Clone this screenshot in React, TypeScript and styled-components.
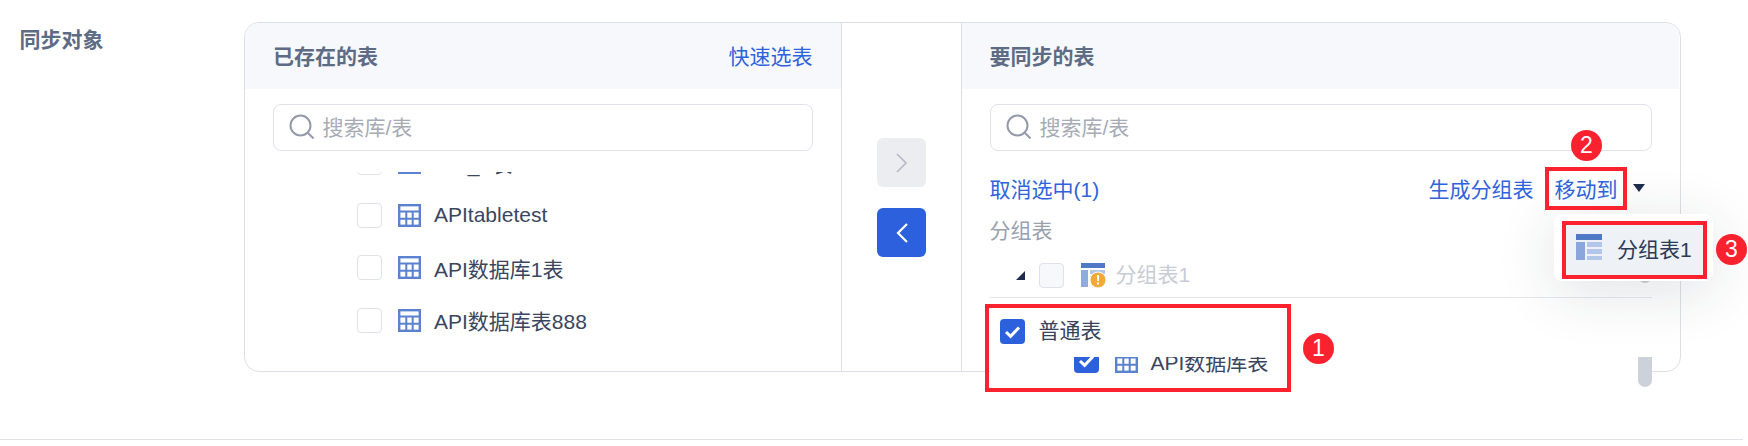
import React from "react";
import styled, { createGlobalStyle } from "styled-components";

const Global = createGlobalStyle`
  html, body { margin: 0; padding: 0; background: #fff; }
  body { font-family: "Liberation Sans", "Noto Sans CJK SC", sans-serif; }
`;

const Page = styled.div`
  position: relative;
  width: 1748px;
  height: 446px;
  overflow: hidden;
  background: #fff;
`;

const Section = styled.div`
  display: flex;
  align-items: flex-start;
  width: 1743px;
  height: 417px;
  padding-top: 22px;
  box-sizing: content-box;
  border-bottom: 1.5px solid #dfe1e6;
`;

const SectionLabel = styled.div`
  width: 224.5px;
  padding: 3px 0 0 19.5px;
  font-size: 21px;
  line-height: 30px;
  font-weight: 700;
  color: #5d6b84;
`;

const Panel = styled.div`
  display: flex;
  width: 1437px;
  height: 350px;
  box-sizing: border-box;
  border: 1.5px solid #dcdfe6;
  border-radius: 15px;
`;

const Pane = styled.div<{ $width: number }>`
  display: flex;
  flex-direction: column;
  width: ${(p) => p.$width}px;
  flex: none;
`;

const PaneHead = styled.div<{ $side: "left" | "right" }>`
  display: flex;
  align-items: center;
  justify-content: space-between;
  height: 66px;
  flex: none;
  box-sizing: border-box;
  padding: 0 28.5px 2px ${(p) => (p.$side === "left" ? 28 : 27.5)}px;
  background: #f7f8fc;
  border-radius: ${(p) => (p.$side === "left" ? "14px 0 0 0" : "0 14px 0 0")};
`;

const HeadTitle = styled.div`
  font-size: 21px;
  font-weight: 700;
  color: #5d6b84;
`;

const LinkText = styled.span<{ $gap?: number }>`
  margin-left: ${(p) => p.$gap ?? 0}px;
  font-size: 21px;
  color: #2f63dd;
  white-space: nowrap;
`;

const SearchBox = styled.div<{ $left: number; $right: number }>`
  display: flex;
  align-items: center;
  gap: 8px;
  height: 47px;
  flex: none;
  box-sizing: border-box;
  margin: 15px ${(p) => p.$right}px 0 ${(p) => p.$left}px;
  padding: 0 0 2px 15px;
  border: 1.5px solid #dfe2ea;
  border-radius: 8px;
  font-size: 21px;
  color: #a6abb6;
`;

const List = styled.div`
  display: flex;
  flex-direction: column;
  height: 200px;
  margin-top: 21px;
  padding-left: 112px;
  overflow: hidden;
  justify-content: flex-end;
  padding-bottom: 24.5px;
  box-sizing: border-box;
`;

const TableRow = styled.div`
  display: flex;
  align-items: center;
  height: 52.5px;
  flex: none;
  font-size: 21px;
  color: #3a4660;
`;

const Check = styled.span<{ $on?: boolean; $muted?: boolean }>`
  display: inline-flex;
  align-items: center;
  justify-content: center;
  width: 25px;
  height: 25px;
  flex: none;
  box-sizing: border-box;
  border-radius: 4px;
  border: ${(p) => (p.$on ? "none" : "1.5px solid #dfe2ea")};
  background: ${(p) => (p.$on ? "#2c60dc" : p.$muted ? "#f7f8fc" : "#fff")};
`;

const RowIcon = styled.span`
  display: inline-flex;
  margin: 0 13px 0 16px;
  flex: none;
`;

const RaisedText = styled.span<{ $lift: number }>`
  padding-bottom: ${(p) => p.$lift}px;
`;

const Middle = styled.div`
  display: flex;
  flex-direction: column;
  align-items: center;
  gap: 21px;
  flex: none;
  width: 119px;
  box-sizing: content-box;
  padding-top: 115px;
  border-left: 1.5px solid #dcdfe6;
  border-right: 1.5px solid #dcdfe6;
`;

const MoveButton = styled.div<{ $active?: boolean }>`
  display: flex;
  align-items: center;
  justify-content: center;
  width: 49px;
  height: 49px;
  border-radius: 6px;
  background: ${(p) => (p.$active ? "#2c60dc" : "#ecedf1")};
  color: ${(p) => (p.$active ? "#fff" : "#b6bac5")};
`;

const Toolbar = styled.div`
  display: flex;
  align-items: center;
  justify-content: space-between;
  height: 40px;
  margin: 17px 34.5px 0 27.5px;
  flex: none;
`;

const ToolbarRight = styled.div`
  display: flex;
  align-items: center;
`;

const Caret = styled.span`
  width: 0;
  height: 0;
  margin-left: 15px;
  border-left: 6.5px solid transparent;
  border-right: 6.5px solid transparent;
  border-top: 8px solid #1f2d4d;
`;

const RightList = styled.div`
  position: relative;
  flex: none;
  height: 165px;
  margin: 0 27.5px;
  padding-top: 4px;
  box-sizing: border-box;
  background: #fff;
  z-index: 1;
`;

const GroupLabel = styled.div`
  font-size: 21px;
  line-height: 38px;
  height: 38px;
  color: #9aa1ae;
`;

const GroupRow = styled.div`
  display: flex;
  align-items: center;
  height: 46px;
  box-sizing: content-box;
  padding: 0 0 1px 26px;
  border-bottom: 1.5px solid #e6e8ec;
  font-size: 21px;
  color: #c8ccd4;
`;

const CornerTriangle = styled.span`
  width: 0;
  height: 0;
  margin: 4px 14px 0 0;
  border-style: solid;
  border-width: 0 0 9px 9px;
  border-color: transparent transparent #1f2d4d transparent;
`;

const GroupCheck = styled(Check)`
  margin-top: 4px;
`;

const GroupIcon = styled.span`
  display: inline-flex;
  margin: 4px 10px 0 17px;
`;

const PlainHead = styled.div`
  display: flex;
  align-items: center;
  gap: 14px;
  height: 25px;
  margin: 21px 0 0 10px;
  font-size: 21px;
  color: #37435c;
`;

const ClippedRow = styled.div`
  display: flex;
  align-items: flex-end;
  height: 16px;
  margin: 13px 0 0 84px;
  overflow: hidden;
  font-size: 21px;
  line-height: 20px;
  color: #3a4660;
`;

const Thumb = styled.div<{ $top: number; $height: number }>`
  position: absolute;
  left: 1638px;
  top: ${(p) => p.$top}px;
  width: 14px;
  height: ${(p) => p.$height}px;
  background: #cdd1da;
  border-radius: 0 0 7px 7px;
  z-index: 2;
`;

const RedBox = styled.div<{ $x: number; $y: number; $w: number; $h: number }>`
  position: absolute;
  left: ${(p) => p.$x}px;
  top: ${(p) => p.$y}px;
  width: ${(p) => p.$w}px;
  height: ${(p) => p.$h}px;
  box-sizing: border-box;
  border: 4px solid #fb222f;
  z-index: 4;
`;

const Badge = styled.div<{ $x: number; $y: number }>`
  position: absolute;
  left: ${(p) => p.$x}px;
  top: ${(p) => p.$y}px;
  display: flex;
  align-items: center;
  justify-content: center;
  width: 31px;
  height: 31px;
  border-radius: 50%;
  background: #fb222f;
  color: #fff;
  font-size: 23px;
  z-index: 5;
`;

const Dropdown = styled.div`
  position: absolute;
  left: 1554px;
  top: 214px;
  display: flex;
  width: 159px;
  height: 67px;
  box-sizing: border-box;
  padding: 7px 6px 2px 8px;
  background: #fff;
  border-radius: 8px;
  box-shadow: 0 10px 60px rgba(30, 40, 60, 0.14);
  z-index: 3;
`;

const DropItem = styled.div`
  display: flex;
  align-items: center;
  flex: 1;
  gap: 15px;
  padding: 0 0 4px 14px;
  background: #eef1f6;
  font-size: 21px;
  color: #2b3a57;
`;

const DropIcon = styled.span`
  display: inline-flex;
  margin-bottom: 2px;
`;

const tableIcon = (
  <svg width="23" height="23" viewBox="0 0 23 23">
    <rect x="1.2" y="1.2" width="20.6" height="20.6" fill="none" stroke="#5b82cf" strokeWidth="2.4" />
    <path d="M1 7.5h21M1 14.8h21M8.3 7.5v15M14.7 7.5v15" stroke="#5b82cf" strokeWidth="2" fill="none" />
  </svg>
);

const Tick = () => (
  <svg width="17" height="14" viewBox="0 0 17 14">
    <path d="M2 7l4.6 4.4L15 2.5" fill="none" stroke="#fff" strokeWidth="3" />
  </svg>
);

const SearchIcon = () => (
  <svg width="26" height="26" viewBox="0 0 26 26" style={{ flex: "none" }}>
    <circle cx="11.5" cy="11.5" r="10" fill="none" stroke="#939bab" strokeWidth="2" />
    <path d="M18.8 18.8L24.5 24.5" stroke="#939bab" strokeWidth="2" />
  </svg>
);

const Chevron = ({ dir, width }: { dir: "left" | "right"; width: number }) => (
  <svg width="14" height="22" viewBox="0 0 14 22">
    <path
      d={dir === "right" ? "M2 2l9 9-9 9" : "M12 2l-9 9 9 9"}
      fill="none"
      stroke="currentColor"
      strokeWidth={width}
    />
  </svg>
);

const rows = ["API_1表", "APItabletest", "API数据库1表", "API数据库表888"];

export default function App() {
  return (
    <Page>
      <Global />
      <Section>
        <SectionLabel>同步对象</SectionLabel>
        <Panel>
          <Pane $width={596}>
            <PaneHead $side="left">
              <HeadTitle>已存在的表</HeadTitle>
              <LinkText>快速选表</LinkText>
            </PaneHead>
            <SearchBox $left={27.5} $right={28.5}>
              <SearchIcon />
              <RaisedText $lift={2}>搜索库/表</RaisedText>
            </SearchBox>
            <List>
              {rows.map((name) => (
                <TableRow key={name}>
                  <Check />
                  <RowIcon>{tableIcon}</RowIcon>
                  {name}
                </TableRow>
              ))}
            </List>
          </Pane>
          <Middle>
            <MoveButton>
              <Chevron dir="right" width={1.6} />
            </MoveButton>
            <MoveButton $active>
              <Chevron dir="left" width={2.2} />
            </MoveButton>
          </Middle>
          <Pane $width={717}>
            <PaneHead $side="right">
              <HeadTitle>要同步的表</HeadTitle>
            </PaneHead>
            <SearchBox $left={27.5} $right={27.5}>
              <SearchIcon />
              <RaisedText $lift={2}>搜索库/表</RaisedText>
            </SearchBox>
            <Toolbar>
              <LinkText>取消选中(1)</LinkText>
              <ToolbarRight>
                <LinkText>生成分组表</LinkText>
                <LinkText $gap={21}>移动到</LinkText>
                <Caret />
              </ToolbarRight>
            </Toolbar>
            <RightList>
              <GroupLabel>分组表</GroupLabel>
              <GroupRow>
                <CornerTriangle />
                <GroupCheck $muted />
                <GroupIcon>
                  <svg width="25" height="25" viewBox="0 0 25 25">
                    <rect x="0" y="0" width="24" height="5" fill="#4f78c6" />
                    <rect x="0" y="7" width="7" height="17" fill="#8fabdd" />
                    <rect x="9" y="7" width="15" height="4" fill="#b2c6e9" />
                    <rect x="9" y="13" width="15" height="4" fill="#b2c6e9" />
                    <circle cx="17" cy="17" r="8" fill="#f2a93b" stroke="#fff" strokeWidth="1" />
                    <path d="M17 12v6M17 19.5v2" stroke="#fff" strokeWidth="2" />
                  </svg>
                </GroupIcon>
                <RaisedText $lift={0}>分组表1</RaisedText>
              </GroupRow>
              <PlainHead>
                <Check $on>
                  <Tick />
                </Check>
                <RaisedText $lift={5}>普通表</RaisedText>
              </PlainHead>
              <ClippedRow>
                <Check $on>
                  <Tick />
                </Check>
                <RowIcon>{tableIcon}</RowIcon>
                API数据库表
              </ClippedRow>
            </RightList>
          </Pane>
        </Panel>
      </Section>
      <Thumb $top={240} $height={43} />
      <Thumb $top={357} $height={30} />
      <Dropdown>
        <DropItem>
          <DropIcon>
            <svg width="26" height="26" viewBox="0 0 26 26">
              <rect x="0" y="0" width="26" height="6" fill="#4f78c6" />
              <rect x="0" y="8" width="9" height="18" fill="#8aa7db" />
              <rect x="11" y="8" width="15" height="5" fill="#b2c6e9" />
              <rect x="11" y="15" width="15" height="5" fill="#b2c6e9" />
              <rect x="11" y="22" width="15" height="4" fill="#b2c6e9" />
            </svg>
          </DropIcon>
          分组表1
        </DropItem>
      </Dropdown>
      <RedBox $x={985} $y={304} $w={306} $h={88} />
      <RedBox $x={1545} $y={167} $w={82} $h={43} />
      <RedBox $x={1562} $y={221} $w={145} $h={58} />
      <Badge $x={1303} $y={333}>1</Badge>
      <Badge $x={1571} $y={130}>2</Badge>
      <Badge $x={1716} $y={234}>3</Badge>
    </Page>
  );
}
